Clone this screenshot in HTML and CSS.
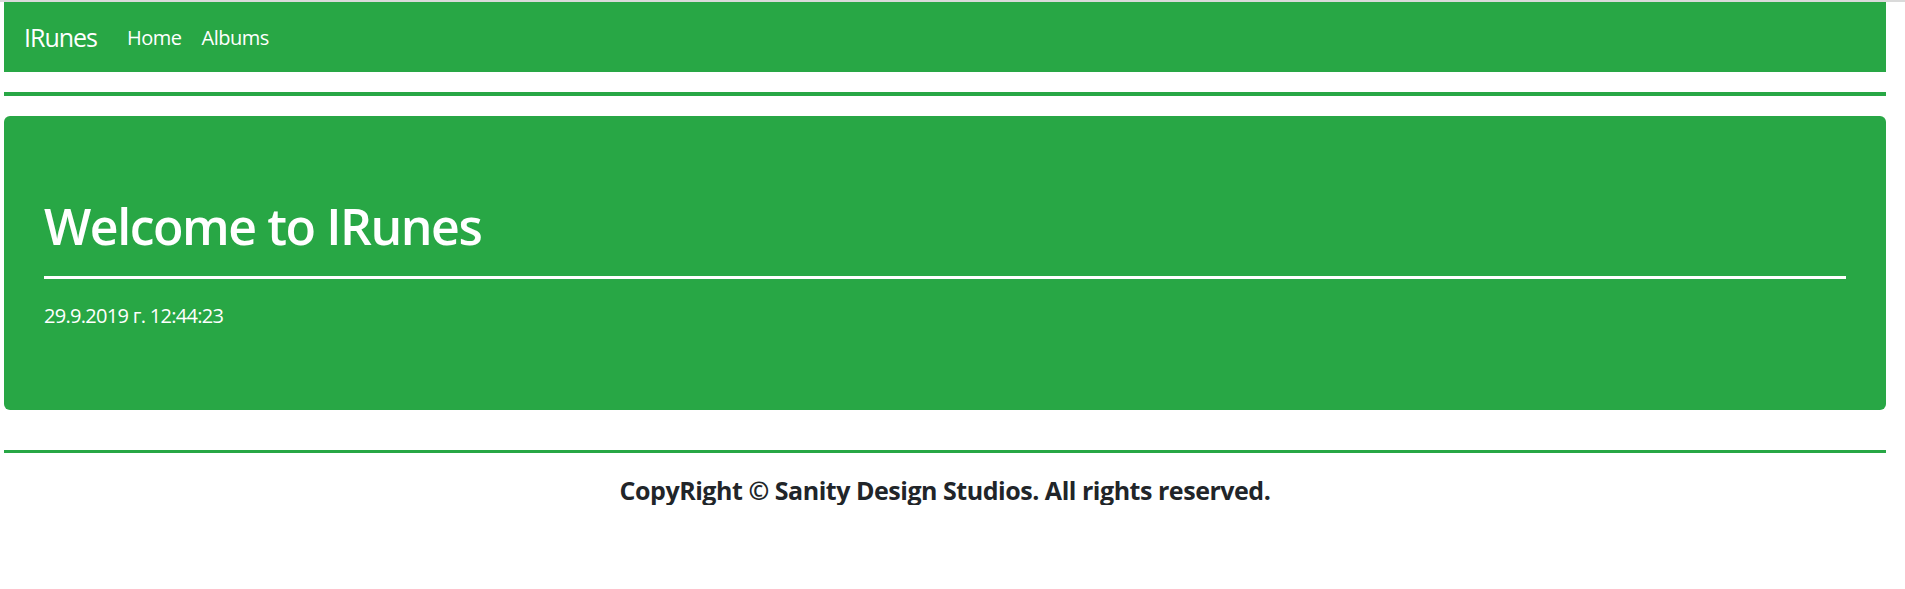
FILE: index.html
```html
<!DOCTYPE html>
<html lang="en">
<head>
<meta charset="utf-8">
<title>IRunes</title>
<link rel="stylesheet" href="styles.css">
</head>
<body>
<div class="page">
  <nav class="navbar">
    <a class="brand" href="#">IRunes</a>
    <ul class="nav-links">
      <li><a class="nav-link" href="#">Home</a></li>
      <li><a class="nav-link" href="#">Albums</a></li>
    </ul>
  </nav>
  <hr class="rule rule-top">
  <main class="jumbotron">
    <h1 class="title">Welcome to IRunes</h1>
    <hr class="rule rule-light">
    <p class="date">29.9.2019 г. 12:44:23</p>
  </main>
  <hr class="rule rule-footer">
  <footer class="footer">
    <h5 class="copyright">CopyRight © Sanity Design Studios. All rights reserved.</h5>
  </footer>
</div>
</body>
</html>
```
FILE: styles.css
```css
* { box-sizing: border-box; }

html, body {
  margin: 0;
  padding: 0;
  background: #fff;
}

body {
  font-family: "Open Sans", "Noto Sans", "Liberation Sans", sans-serif;
  font-size: 20px;
  line-height: 1.5;
  color: #212529;
  border-top: 2px solid #dadada;
}

.page {
  padding: 0 19px 0 4px;
}

.navbar {
  display: flex;
  align-items: center;
  height: 70px;
  padding: 2px 20px 0;
  background: #28a745;
}

.brand {
  font-size: 25px;
  line-height: 37.5px;
  letter-spacing: -1px;
  color: #fff;
  text-decoration: none;
  margin-right: 20px;
}

.nav-links {
  display: flex;
  list-style: none;
  margin: 0;
  padding: 0;
}

.nav-link {
  display: block;
  padding: 10px;
  color: #fff;
  text-decoration: none;
  line-height: 30px;
  letter-spacing: -0.5px;
}

.rule {
  border: 0;
  margin: 20px 0;
}

.rule-top {
  height: 4px;
  background: #28a745;
}

.rule-light {
  height: 3px;
  background: #fff;
}

.rule-footer {
  height: 3px;
  background: #28a745;
  margin-top: 40px;
}

.jumbotron {
  background: #28a745;
  border-radius: 6px;
  padding: 80px 40px 79px;
  color: #fff;
}

.title {
  margin: 0 0 10px;
  font-size: 50px;
  line-height: 60px;
  font-weight: 600;
  letter-spacing: -1.45px;
}

.date {
  margin: 0;
  padding-top: 2px;
  font-size: 20px;
  line-height: 30px;
  letter-spacing: -0.7px;
}

.footer {
  text-align: center;
  padding-top: 2px;
}

.copyright {
  margin: 0;
  font-size: 25px;
  line-height: 30px;
  font-weight: 700;
  letter-spacing: -0.47px;
}
```
